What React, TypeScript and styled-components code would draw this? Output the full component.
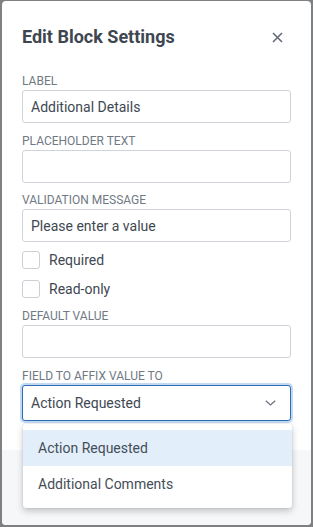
import React from "react";
import styled, { createGlobalStyle } from "styled-components";

const GlobalStyle = createGlobalStyle`
  html, body {
    margin: 0;
    padding: 0;
    background: #7f8082;
    font-family: Roboto, "Noto Sans", Arial, sans-serif;
  }
  * { box-sizing: border-box; }
`;

const Modal = styled.div`
  margin: 1px 2px 0 2px;
  height: 524px;
  background: #ffffff;
  border-radius: 4px;
  display: flex;
  flex-direction: column;
  overflow: visible;
`;

const Header = styled.div`
  display: flex;
  align-items: center;
  justify-content: space-between;
  padding: 24px 20px 0 20px;
`;

const Title = styled.h2`
  margin: 0;
  font-size: 18px;
  line-height: 24px;
  font-weight: 700;
  color: #3e4751;
`;

const CloseButton = styled.button`
  width: 20px;
  height: 20px;
  margin-right: 4px;
  padding: 0;
  border: none;
  background: transparent;
  display: flex;
  align-items: center;
  justify-content: center;
  color: #5f6873;
  cursor: pointer;
`;

const Body = styled.div`
  flex: 1;
  display: flex;
  flex-direction: column;
  padding: 24px 20px 0 20px;
`;

const Group = styled.div<{ $gap?: number }>`
  display: flex;
  flex-direction: column;
  margin-bottom: ${(p) => p.$gap ?? 10}px;
`;

const Label = styled.label`
  font-size: 12px;
  line-height: 16px;
  color: #707984;
  text-transform: uppercase;
  margin-bottom: 1px;
`;

const Input = styled.input`
  height: 33px;
  width: 100%;
  border: 1px solid #cfd4da;
  border-radius: 3px;
  padding: 0 8px;
  font-family: Roboto, Arial, sans-serif;
  font-size: 14px;
  color: #404852;
  background: #fff;
  outline: none;
`;

const CheckRow = styled.label<{ $gap: number }>`
  display: flex;
  align-items: center;
  gap: 9px;
  height: 18px;
  margin-bottom: ${(p) => p.$gap}px;
  font-size: 14px;
  color: #404852;
`;

const Box = styled.span`
  width: 18px;
  height: 18px;
  border: 1px solid #cbd0d6;
  border-radius: 3px;
  background: #fff;
  flex: none;
`;

const SelectWrap = styled.div`
  position: relative;
`;

const SelectBox = styled.div`
  height: 36px;
  display: flex;
  align-items: center;
  justify-content: space-between;
  padding: 0 14px 0 8px;
  border: 1px solid #2f6cb2;
  border-radius: 3px;
  box-shadow: 0 0 0 2px rgba(120, 170, 230, 0.45);
  font-size: 14px;
  color: #404852;
  background: #fff;
`;

const Menu = styled.ul`
  position: absolute;
  z-index: 5;
  top: calc(100% + 3px);
  left: 1px;
  right: -1px;
  margin: 0;
  padding: 6px 0;
  list-style: none;
  background: #fff;
  border-radius: 3px;
  box-shadow: 0 3px 7px rgba(0, 0, 0, 0.22), 0 0 2px rgba(0, 0, 0, 0.12);
`;

const MenuItem = styled.li<{ $active?: boolean }>`
  height: 36px;
  display: flex;
  align-items: center;
  padding: 0 15px;
  font-size: 14px;
  color: #454d57;
  background: ${(p) => (p.$active ? "#e2effb" : "transparent")};
`;

const Footer = styled.div`
  height: 75px;
  background: #f6f7f9;
  border-radius: 0 0 4px 4px;
`;

export default function App() {
  return (
    <>
      <GlobalStyle />
      <Modal>
        <Header>
          <Title>Edit Block Settings</Title>
          <CloseButton aria-label="Close">
            <svg width="11" height="11" viewBox="0 0 11 11">
              <path d="M1 1 L10 10 M10 1 L1 10" stroke="currentColor" strokeWidth="1.5" fill="none" />
            </svg>
          </CloseButton>
        </Header>
        <Body>
          <Group>
            <Label>Label</Label>
            <Input defaultValue="Additional Details" />
          </Group>
          <Group $gap={9}>
            <Label>Placeholder Text</Label>
            <Input defaultValue="" />
          </Group>
          <Group $gap={9}>
            <Label>Validation Message</Label>
            <Input defaultValue="Please enter a value" />
          </Group>
          <CheckRow $gap={11}>
            <Box />
            Required
          </CheckRow>
          <CheckRow $gap={10}>
            <Box />
            Read-only
          </CheckRow>
          <Group>
            <Label>Default Value</Label>
            <Input defaultValue="" />
          </Group>
          <Group $gap={0}>
            <Label>Field to affix value to</Label>
            <SelectWrap>
              <SelectBox>
                <span>Action Requested</span>
                <svg width="11" height="6" viewBox="0 0 11 6">
                  <path d="M0.8 0.8 L5.5 5 L10.2 0.8" stroke="#6b7480" strokeWidth="1.3" fill="none" />
                </svg>
              </SelectBox>
              <Menu>
                <MenuItem $active>Action Requested</MenuItem>
                <MenuItem>Additional Comments</MenuItem>
              </Menu>
            </SelectWrap>
          </Group>
        </Body>
        <Footer />
      </Modal>
    </>
  );
}
